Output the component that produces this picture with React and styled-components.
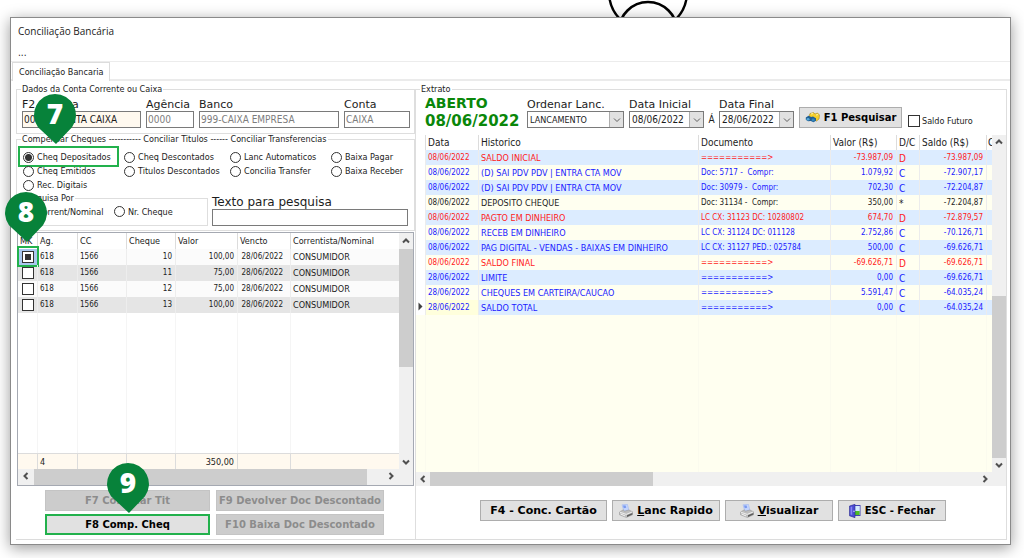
import React, { useState } from "react";
import styled, { createGlobalStyle } from "styled-components";

const GlobalStyle = createGlobalStyle`
  * {
    box-sizing: border-box;
  }

  body {
    margin: 0;
    background: #ffffff;
    font-family: "DejaVu Sans Condensed", Tahoma, "DejaVu Sans", sans-serif;
    font-size: 9px;
    color: #1c1c1c;
  }

  button, input, select {
    font-family: inherit;
  }
`;

const Page = styled.div`
  position: relative;
  padding: 17px 13px 14px 10px;
`;

const Mascot = styled.svg`
  position: absolute;
  top: 0;
  left: 604px;
  width: 88px;
  height: 18px;
`;

const Window = styled.main`
  position: relative;
  display: flex;
  flex-direction: column;
  background: #ffffff;
  border: 1px solid #8a8a8a;
  box-shadow: 0 3px 14px rgba(0, 0, 0, 0.4);
`;

const TitleBar = styled.header`
  height: 44px;
  padding: 6px 7px 0;
  border-bottom: 1px solid #ececec;
`;

const Title = styled.h1`
  margin: 0;
  font-family: "Open Sans", "Noto Sans", sans-serif;
  font-size: 10px;
  font-weight: 400;
  line-height: 14px;
`;

const MenuDots = styled.div`
  margin-top: 8px;
  font-size: 10px;
  line-height: 14px;
`;

const TabBar = styled.nav`
  display: flex;
  height: 19px;
  padding-left: 1px;
  border-bottom: 2px solid #ebebeb;
`;

const Tab = styled.button`
  height: 19px;
  padding: 0 6px;
  border: 1px solid #dcdcdc;
  border-width: 1px 1px 0 1px;
  background: #ffffff;
  font-size: 9px;
  color: #1c1c1c;
`;

const Body = styled.div`
  display: grid;
  grid-template-columns: 399px 1fr;
  margin: 0 3px 4px 5px;
  padding-top: 3px;
  border-bottom: 1px solid #dcdcdc;
`;

const LeftColumn = styled.section`
  display: flex;
  flex-direction: column;
  min-width: 0;
`;

const Group = styled.fieldset`
  min-width: 0;
  margin: 0;
  padding: 0;
  border: 1px solid #dedede;
`;

const Legend = styled.legend`
  margin-left: 4px;
  padding: 0 1px;
  font-size: 9px;
  line-height: 10px;
`;

const AccountFields = styled.div`
  display: grid;
  grid-template-columns: 119px 48px 1fr 66px;
  column-gap: 5px;
  padding: 4px 4px 5px 5px;
`;

const Field = styled.label`
  display: flex;
  flex-direction: column;
  min-width: 0;
`;

const FieldName = styled.span`
  font-family: "DejaVu Sans", Verdana, sans-serif;
  font-size: 11px;
  line-height: 13px;
  white-space: nowrap;
`;

const TextInput = styled.input`
  width: 100%;
  height: 17px;
  padding: 0 1px;
  border: 1px solid #7a7a7a;
  border-radius: 0;
  background: ${(props) => (props.$cream ? "#fff9ef" : "#ffffff")};
  font-size: 10px;
  color: ${(props) => (props.readOnly ? "#7d7d7d" : "#1c1c1c")};
`;

const RadioGrid = styled.div`
  display: grid;
  grid-template-columns: 101px 106px 101px 1fr;
  grid-auto-rows: 14px;
  padding: 6px 0 0 6px;
`;

const Option = styled.label`
  position: relative;
  display: flex;
  align-items: center;
  gap: 3px;
  font-size: 9px;
  white-space: nowrap;
`;

const Radio = styled.input`
  appearance: none;
  flex: none;
  width: 11px;
  height: 11px;
  margin: 0;
  border: 1px solid #333333;
  border-radius: 50%;
  background: #ffffff;

  &:checked {
    background: radial-gradient(circle, #333333 0 3px, #ffffff 4px);
  }
`;

const Highlight = styled.span`
  position: absolute;
  inset: ${(props) => props.$inset};
  border: 2px solid #22b14c;
  pointer-events: none;
`;

const SearchRow = styled.div`
  display: grid;
  grid-template-columns: 191px 1fr;
  column-gap: 4px;
  padding: 1px 6px 4px 0;
`;

const SearchOptions = styled.div`
  display: grid;
  grid-template-columns: 91px 1fr;
  padding: 3px 0 5px 5px;
`;

const SearchField = styled(Field)`
  padding-top: 2px;

  ${FieldName} {
    font-size: 12px;
    line-height: 14px;
  }
`;

const GridFrame = styled.div`
  display: grid;
  grid-template-columns: 1fr 14px;
  margin: ${(props) => props.$margin || "0"};
  border: ${(props) => (props.$framed ? "1px solid #a5a9b2" : "none")};
`;

const ChequeTable = styled.table`
  width: 100%;
  border-collapse: separate;
  border-spacing: 0;
  table-layout: fixed;
  font-size: 8px;

  th,
  td {
    height: 16px;
    padding: 0 3px 0 2px;
    border-right: 1px solid #ededed;
    line-height: 12px;
    font-weight: 400;
    text-align: left;
    white-space: nowrap;
  }

  th {
    font-size: 9px;
    border-color: #dcdcdc;
  }

  th:last-child,
  td:last-child {
    border-right: none;
  }

  tbody tr:nth-child(odd) {
    background: #fbfbfb;
  }

  tbody tr:nth-child(even) {
    background: #e5e5e5;
  }

  tbody tr.empty {
    background: #ffffff;
  }

  tbody tr.empty td {
    height: 140px;
    border-color: #f5f5f5;
  }

  tfoot td {
    background: #fff9ef;
    border-top: 1px solid #dcdcdc;
    border-color: #dcdcdc;
    font-size: 9px;
  }

  td.num {
    text-align: right;
  }

  td.date {
    padding-right: 7px;
    text-align: right;
  }

  td.name {
    font-size: 9px;
  }

  td.mark {
    position: relative;
    padding: 0 0 0 4px;
  }

  td.selected {
    background: #a9c8ee;
  }
`;

const MarkBox = styled.input`
  appearance: none;
  display: block;
  width: 12px;
  height: 12px;
  margin: 0;
  border: 1px solid #333333;
  background: #ffffff;

  &:checked {
    background: #333333;
    box-shadow: inset 0 0 0 2px #ffffff;
  }
`;

const VerticalBar = styled.div`
  display: flex;
  flex-direction: column;
  background: #f0f0f0;
`;

const HorizontalBar = styled.div`
  display: flex;
  height: ${(props) => props.$height};
  background: #f0f0f0;
`;

const Corner = styled.div`
  background: #f0f0f0;
`;

const Thumb = styled.div`
  flex: ${(props) => props.$flex};
  background: #cdcdcd;
`;

const Track = styled.div`
  flex: ${(props) => props.$flex};
`;

const ArrowButton = styled.button`
  display: flex;
  flex: none;
  align-items: center;
  justify-content: center;
  width: ${(props) => props.$width || "14px"};
  height: ${(props) => props.$height || "14px"};
  padding: 0;
  border: none;
  background: transparent;
`;

const LeftActions = styled.div`
  display: grid;
  grid-template-columns: 165px 168px;
  grid-auto-rows: 21px;
  gap: 3px 6px;
  padding: 4px 0 4px 29px;
`;

const Button = styled.button`
  display: flex;
  align-items: center;
  justify-content: center;
  gap: 4px;
  height: 21px;
  width: ${(props) => props.$width || "auto"};
  padding: 0;
  border: 1px solid #adadad;
  background: #e1e1e1;
  font-family: "DejaVu Sans", Verdana, sans-serif;
  font-size: ${(props) => props.$size || "10px"};
  font-weight: 700;
  color: #000000;
  white-space: nowrap;

  &:disabled {
    border-color: #c4c4c4;
    background: #cccccc;
    color: #8c8c8c;
  }
`;

const MarkedButton = styled(Button)`
  border: 2px solid #22b14c;
`;

const Statement = styled.fieldset`
  display: flex;
  flex-direction: column;
  min-width: 0;
  margin: 0;
  padding: 0;
  border: 1px solid #dedede;
  border-bottom: none;
`;

const FilterBar = styled.div`
  display: flex;
  height: 41px;
  padding-left: 9px;
`;

const Status = styled.div`
  width: 102px;
  font-family: "DejaVu Sans", Verdana, sans-serif;
  font-weight: 700;
  font-size: 15px;
  line-height: 18px;
  color: #0a870a;
`;

const StatusWord = styled.div`
  font-size: 14px;
`;

const FilterField = styled(Field)`
  width: ${(props) => props.$width};
  margin-right: ${(props) => props.$after || "0"};
  padding-top: 4px;
`;

const SelectWrap = styled.span`
  position: relative;
  display: block;
`;

const Select = styled.select`
  appearance: none;
  display: block;
  width: 100%;
  height: 17px;
  padding: 0 15px 0 2px;
  border: 1px solid #7a7a7a;
  border-radius: 0;
  background: #ffffff;
  font-size: ${(props) => props.$size || "10px"};
  color: #1c1c1c;
`;

const SelectArrow = styled.span`
  position: absolute;
  top: 1px;
  right: 1px;
  bottom: 1px;
  display: flex;
  align-items: center;
  justify-content: center;
  width: 14px;
  background: #e1e1e1;
  border-left: 1px solid #adadad;
  pointer-events: none;
`;

const Until = styled.span`
  width: 15px;
  padding-top: 20px;
  font-size: 10px;
  line-height: 12px;
  text-align: center;
`;

const SearchButton = styled(Button)`
  margin: 13px 6px 0 5px;
`;

const FutureOption = styled.label`
  display: flex;
  align-items: center;
  gap: 2px;
  height: 14px;
  margin-top: 20px;
  font-size: 9px;
  white-space: nowrap;
`;

const StatementTable = styled.table`
  width: 100%;
  border-collapse: separate;
  border-spacing: 0;
  table-layout: fixed;
  font-size: 9px;

  th,
  td {
    height: 15px;
    padding: 0 2px;
    border-right: 1px solid #ececec;
    line-height: 12px;
    font-weight: 400;
    text-align: left;
    white-space: pre;
    overflow: hidden;
  }

  th {
    height: 15px;
    border-color: #dcdcdc;
    font-size: 10px;
  }

  th:last-child,
  td:last-child {
    padding: 0 0 0 1px;
    border-right: none;
  }

  tbody tr {
    background: #fffff0;
  }

  tbody tr:nth-child(odd) {
    background: #dcecff;
  }

  tbody tr.empty {
    background: #fffff0;
  }

  tbody tr.empty td {
    height: 157px;
    border-color: #fbfbee;
  }

  td.cursor {
    padding: 0;
    background: #ffffff;
  }

  td.date,
  td.doc,
  td.num {
    font-size: 8px;
  }

  td.num {
    text-align: right;
    padding-right: 3px;
  }

  td.kind {
    padding-top: 3px;
    font-size: 10px;
  }

  td.focused {
    background: #ffffdc;
  }
`;

const StatementRow = styled.tr`
  color: ${(props) => props.$color};
`;

const RightActions = styled.div`
  display: flex;
  gap: 5px;
  padding: 14px 0 17px 64px;
`;

const PinShape = styled.svg`
  position: absolute;
  left: ${(props) => props.$x}px;
  top: ${(props) => props.$y}px;
  width: 44px;
  height: 52px;
`;

const RED = "#ff1a1a";
const BLUE = "#1a1aff";
const BLACK = "#1c1c1c";
const DOUBLE_LINE = "===========>";

const optionColumns = [
  "Cheq Depositados",
  "Cheq Descontados",
  "Lanc Automaticos",
  "Baixa Pagar",
  "Cheq Emitidos",
  "Titulos Descontados",
  "Concilia Transfer",
  "Baixa Receber",
  "Rec. Digitais",
];

const cheques = [
  { numero: "10", valor: "100,00" },
  { numero: "11", valor: "75,00" },
  { numero: "12", valor: "75,00" },
  { numero: "13", valor: "100,00" },
];

const lancamentos = [
  ["08/06/2022", "SALDO INICIAL", DOUBLE_LINE, "-73.987,09", "D", "-73.987,09", RED],
  ["08/06/2022", "(D) SAI PDV PDV | ENTRA CTA MOV", "Doc: 5717 -  Compr:", "1.079,92", "C", "-72.907,17", BLUE],
  ["08/06/2022", "(D) SAI PDV PDV | ENTRA CTA MOV", "Doc: 30979 -  Compr:", "702,30", "C", "-72.204,87", BLUE],
  ["08/06/2022", "DEPOSITO CHEQUE", "Doc: 31134 -  Compr:", "350,00", "*", "-72.204,87", BLACK],
  ["08/06/2022", "PAGTO EM DINHEIRO", "LC CX: 31123 DC: 10280802", "674,70", "D", "-72.879,57", RED],
  ["08/06/2022", "RECEB EM DINHEIRO", "LC CX: 31124 DC: 011128", "2.752,86", "C", "-70.126,71", BLUE],
  ["08/06/2022", "PAG DIGITAL - VENDAS - BAIXAS EM DINHEIRO", "LC CX: 31127 PED.: 025784", "500,00", "C", "-69.626,71", BLUE],
  ["08/06/2022", "SALDO FINAL", DOUBLE_LINE, "-69.626,71", "D", "-69.626,71", RED],
  ["28/06/2022", "LIMITE", DOUBLE_LINE, "0,00", "C", "-69.626,71", BLUE],
  ["28/06/2022", "CHEQUES EM CARTEIRA/CAUCAO", DOUBLE_LINE, "5.591,47", "C", "-64.035,24", BLUE],
  ["28/06/2022", "SALDO TOTAL", DOUBLE_LINE, "0,00", "C", "-64.035,24", BLUE],
];

const arrowPaths = {
  up: "M1 5.5 L4 2.5 L7 5.5",
  down: "M1 2.5 L4 5.5 L7 2.5",
  left: "M5.5 1 L2.5 4 L5.5 7",
  right: "M2.5 1 L5.5 4 L2.5 7",
};

const Chevron = ({ dir, color = "#505050", width = 2 }) => (
  <svg width="8" height="8" viewBox="0 0 8 8" aria-hidden="true">
    <path d={arrowPaths[dir]} fill="none" stroke={color} strokeWidth={width} />
  </svg>
);

const BinocularsIcon = () => (
  <svg width="15" height="11" viewBox="0 0 15 11" aria-hidden="true">
    <path d="M5 1.5 L8.5 .6 L10 2 L12.5 1 L14.5 3 L14 7 L11.5 9 L9 7.5 L4 4.5 Z" fill="#f5cf2b" stroke="#a8871c" strokeWidth=".6" />
    <path d="M6 2 L8 1.5 M11 3 L13 2.5" stroke="#fff3a0" strokeWidth="1.2" />
    <path d="M.8 5.5 L3.5 3.8 L6.2 5 L8 4.6 L11 6.2 L11 8.8 L8.5 10.3 L5.8 9 L3 9.3 L.8 7.8 Z" fill="#215e92" />
    <ellipse cx="3" cy="7.2" rx="1.5" ry="1.3" fill="#55a9d8" />
    <ellipse cx="8.2" cy="8" rx="1.6" ry="1.4" fill="#3187bd" />
  </svg>
);

const PrinterIcon = () => (
  <svg width="14" height="14" viewBox="0 0 14 14" aria-hidden="true">
    <path d="M3 .8 L8.4 .3 L10 6.5 L5 7.6 Z" fill="#c3d4fc" stroke="#9db3f0" strokeWidth=".5" />
    <path d="M4 1.6 L6.6 1.4 L7.2 3.8 L4.8 4.2 Z" fill="#7b9af0" />
    <path d="M.5 8 L4.4 5.8 L5.3 7.2 L9.8 6 L13.5 7.8 L13.5 10.8 L7.4 13.5 L.5 10.8 Z" fill="#bdbdbd" stroke="#909090" strokeWidth=".5" />
    <path d="M.9 8.2 L7.2 10.4 L13 8" fill="none" stroke="#eeeeee" strokeWidth="1" />
    <path d="M8 11.2 L13.4 9 L13.4 10.6 L8 12.9 Z" fill="#5a5a5a" />
    <path d="M1.6 10 L6.2 12" stroke="#f4f4f4" strokeWidth="1" />
  </svg>
);

const DoorIcon = () => (
  <svg width="12" height="14" viewBox="0 0 12 14" aria-hidden="true">
    <rect x="4.5" y="1.5" width="6.5" height="10" fill="#ffffff" stroke="#4343b4" />
    <rect x="6" y="2" width="4.5" height="5" fill="#d3ecff" />
    <rect x="6" y="7" width="4.5" height="4" fill="#4fbe24" />
    <path d="M.5 2 L6 .3 L6 13.7 L.5 11.8 Z" fill="#4b4bd2" stroke="#29298e" strokeWidth=".6" />
    <path d="M1.6 3 L3.2 2.5 L3.2 11 L1.6 10.5 Z" fill="#8787f0" />
    <circle cx="5" cy="7.3" r=".7" fill="#e6e6ff" />
  </svg>
);

const Pin = ({ x, y, label }) => (
  <PinShape $x={x} $y={y} viewBox="0 0 44 52">
    <path d="M22 1 A21 21 0 0 0 5 34.3 L23 51 L39 34.3 A21 21 0 0 0 22 1 Z" fill="#07823a" />
    <text
      x="22"
      y="31"
      textAnchor="middle"
      fontFamily="Open Sans, Noto Sans, sans-serif"
      fontSize="28"
      fontWeight="800"
      fill="#ffffff"
    >
      {label}
    </text>
  </PinShape>
);

const DropDown = ({ value, size }) => (
  <SelectWrap>
    <Select defaultValue={value} $size={size}>
      <option>{value}</option>
    </Select>
    <SelectArrow>
      <Chevron dir="down" color="#606060" width={1} />
    </SelectArrow>
  </SelectWrap>
);

const ChequeGrid = () => (
  <GridFrame $framed $margin="1px 1px 0 1px">
    <ChequeTable>
      <colgroup>
        <col style={{ width: 20 }} />
        <col style={{ width: 40 }} />
        <col style={{ width: 49 }} />
        <col style={{ width: 49 }} />
        <col style={{ width: 62 }} />
        <col style={{ width: 53 }} />
        <col />
      </colgroup>
      <thead>
        <tr>
          <th>MK</th>
          <th>Ag.</th>
          <th>CC</th>
          <th>Cheque</th>
          <th>Valor</th>
          <th>Vencto</th>
          <th>Correntista/Nominal</th>
        </tr>
      </thead>
      <tbody>
        {cheques.map((cheque, index) => (
          <tr key={cheque.numero}>
            <td className={index === 0 ? "mark selected" : "mark"}>
              <MarkBox
                type="checkbox"
                defaultChecked={index === 0}
                aria-label={`Marcar cheque ${cheque.numero}`}
              />
              {index === 0 && <Highlight $inset="-3px -2px -2px -1px" />}
            </td>
            <td>618</td>
            <td>1566</td>
            <td className="num">{cheque.numero}</td>
            <td className="num">{cheque.valor}</td>
            <td className="date">28/06/2022</td>
            <td className="name">CONSUMIDOR</td>
          </tr>
        ))}
        <tr className="empty">
          <td />
          <td />
          <td />
          <td />
          <td />
          <td />
          <td />
        </tr>
      </tbody>
      <tfoot>
        <tr>
          <td />
          <td>4</td>
          <td />
          <td />
          <td className="num">350,00</td>
          <td />
          <td />
        </tr>
      </tfoot>
    </ChequeTable>
    <VerticalBar>
      <ArrowButton $height="16px" aria-label="Subir">
        <Chevron dir="up" />
      </ArrowButton>
      <Thumb $flex="117" />
      <Track $flex="88" />
      <ArrowButton aria-label="Descer">
        <Chevron dir="down" />
      </ArrowButton>
    </VerticalBar>
    <HorizontalBar $height="16px">
      <ArrowButton $width="16px" aria-label="Esquerda">
        <Chevron dir="left" />
      </ArrowButton>
      <Thumb $flex="331" />
      <Track $flex="16" />
      <ArrowButton $width="16px" aria-label="Direita">
        <Chevron dir="right" />
      </ArrowButton>
    </HorizontalBar>
    <Corner />
  </GridFrame>
);

const StatementGrid = () => (
  <GridFrame>
    <StatementTable>
      <colgroup>
        <col style={{ width: 10 }} />
        <col style={{ width: 53 }} />
        <col />
        <col style={{ width: 132 }} />
        <col style={{ width: 66 }} />
        <col style={{ width: 23 }} />
        <col style={{ width: 67 }} />
        <col style={{ width: 5 }} />
      </colgroup>
      <thead>
        <tr>
          <th />
          <th>Data</th>
          <th>Historico</th>
          <th>Documento</th>
          <th>Valor (R$)</th>
          <th>D/C</th>
          <th>Saldo (R$)</th>
          <th>C</th>
        </tr>
      </thead>
      <tbody>
        {lancamentos.map(([data, historico, doc, valor, dc, saldo, cor], index) => {
          const atual = index === lancamentos.length - 1;

          return (
            <StatementRow key={index} $color={cor}>
              <td className="cursor">
                {atual && (
                  <svg width="9" height="9" viewBox="0 0 9 9" aria-hidden="true">
                    <path d="M2.5 .5 L6.5 4.5 L2.5 8.5 Z" fill="#404040" />
                  </svg>
                )}
              </td>
              <td className={atual ? "date focused" : "date"}>{data}</td>
              <td>{historico}</td>
              <td className="doc">{doc}</td>
              <td className="num">{valor}</td>
              <td className="kind">{dc}</td>
              <td className="num">{saldo}</td>
              <td />
            </StatementRow>
          );
        })}
        <tr className="empty">
          <td />
          <td />
          <td />
          <td />
          <td />
          <td />
          <td />
          <td />
        </tr>
      </tbody>
    </StatementTable>
    <VerticalBar>
      <ArrowButton aria-label="Subir">
        <Chevron dir="up" />
      </ArrowButton>
      <Track $flex="147" />
      <Thumb $flex="161" />
      <ArrowButton aria-label="Descer">
        <Chevron dir="down" />
      </ArrowButton>
    </VerticalBar>
    <HorizontalBar $height="14px">
      <ArrowButton aria-label="Esquerda">
        <Chevron dir="left" />
      </ArrowButton>
      <Thumb $flex="223" />
      <Track $flex="324" />
      <ArrowButton aria-label="Direita">
        <Chevron dir="right" />
      </ArrowButton>
    </HorizontalBar>
    <Corner />
  </GridFrame>
);

const App = () => {
  const [tipo, setTipo] = useState("Cheq Depositados");
  const [busca, setBusca] = useState("nominal");

  return (
    <>
      <GlobalStyle />
      <Page>
        <Mascot viewBox="0 0 88 18" aria-hidden="true">
          <circle cx="44" cy="-8" r="39" fill="#ffffff" stroke="#000000" strokeWidth="2.4" />
          <circle cx="44" cy="31" r="29" fill="#ffffff" stroke="#000000" strokeWidth="2.6" />
        </Mascot>

        <Window>
          <TitleBar>
            <Title>Conciliação Bancária</Title>
            <MenuDots>...</MenuDots>
          </TitleBar>
          <TabBar>
            <Tab type="button">Conciliação Bancaria</Tab>
          </TabBar>

          <Body>
            <LeftColumn>
              <Group>
                <Legend>Dados da Conta Corrente ou Caixa</Legend>
                <AccountFields>
                  <Field>
                    <FieldName>F2 - Conta</FieldName>
                    <TextInput $cream defaultValue="00001-CONTA CAIXA" />
                  </Field>
                  <Field>
                    <FieldName>Agência</FieldName>
                    <TextInput readOnly value="0000" />
                  </Field>
                  <Field>
                    <FieldName>Banco</FieldName>
                    <TextInput readOnly value="999-CAIXA EMPRESA" />
                  </Field>
                  <Field>
                    <FieldName>Conta</FieldName>
                    <TextInput readOnly value="CAIXA" />
                  </Field>
                </AccountFields>
              </Group>

              <Group>
                <Legend>
                  Compensar Cheques ----------- Conciliar Titulos ------ Conciliar
                  Transferencias
                </Legend>
                <RadioGrid>
                  {optionColumns.map((nome, index) => (
                    <Option key={nome}>
                      <Radio
                        type="radio"
                        name="tipo"
                        checked={tipo === nome}
                        onChange={() => setTipo(nome)}
                      />
                      {nome}
                      {index === 0 && <Highlight $inset="-4px 5px -3px -5px" />}
                    </Option>
                  ))}
                </RadioGrid>
                <SearchRow>
                  <Group>
                    <Legend>Pesquisa Por</Legend>
                    <SearchOptions>
                      <Option>
                        <Radio
                          type="radio"
                          name="busca"
                          checked={busca === "nominal"}
                          onChange={() => setBusca("nominal")}
                        />
                        Corrent/Nominal
                      </Option>
                      <Option>
                        <Radio
                          type="radio"
                          name="busca"
                          checked={busca === "cheque"}
                          onChange={() => setBusca("cheque")}
                        />
                        Nr. Cheque
                      </Option>
                    </SearchOptions>
                  </Group>
                  <SearchField>
                    <FieldName>Texto para pesquisa</FieldName>
                    <TextInput />
                  </SearchField>
                </SearchRow>
              </Group>

              <ChequeGrid />

              <LeftActions>
                <Button disabled>F7 Conciliar Tit</Button>
                <Button disabled>F9 Devolver Doc Descontado</Button>
                <MarkedButton>F8 Comp. Cheq</MarkedButton>
                <Button disabled>F10 Baixa Doc Descontado</Button>
              </LeftActions>
            </LeftColumn>

            <Statement>
              <Legend>Extrato</Legend>
              <FilterBar>
                <Status>
                  <StatusWord>ABERTO</StatusWord>
                  08/06/2022
                </Status>
                <FilterField $width="97px" $after="5px">
                  <FieldName>Ordenar Lanc.</FieldName>
                  <DropDown value="LANCAMENTO" size="9px" />
                </FilterField>
                <FilterField $width="75px">
                  <FieldName>Data Inicial</FieldName>
                  <DropDown value="08/06/2022" />
                </FilterField>
                <Until>Á</Until>
                <FilterField $width="75px">
                  <FieldName>Data Final</FieldName>
                  <DropDown value="28/06/2022" />
                </FilterField>
                <SearchButton $width="103px">
                  <BinocularsIcon />
                  F1 Pesquisar
                </SearchButton>
                <FutureOption>
                  <MarkBox type="checkbox" />
                  Saldo Futuro
                </FutureOption>
              </FilterBar>

              <StatementGrid />

              <RightActions>
                <Button $width="127px" $size="11px">
                  F4 - Conc. Cartão
                </Button>
                <Button $width="108px" $size="11px">
                  <PrinterIcon />
                  <span>
                    <u>L</u>anc Rapido
                  </span>
                </Button>
                <Button $width="108px" $size="11px">
                  <PrinterIcon />
                  <span>
                    <u>V</u>isualizar
                  </span>
                </Button>
                <Button $width="108px">
                  <DoorIcon />
                  ESC - Fechar
                </Button>
              </RightActions>
            </Statement>
          </Body>
        </Window>

        <Pin x={33} y={93} label="7" />
        <Pin x={4} y={191} label="8" />
        <Pin x={106} y={462} label="9" />
      </Page>
    </>
  );
};

export default App;
